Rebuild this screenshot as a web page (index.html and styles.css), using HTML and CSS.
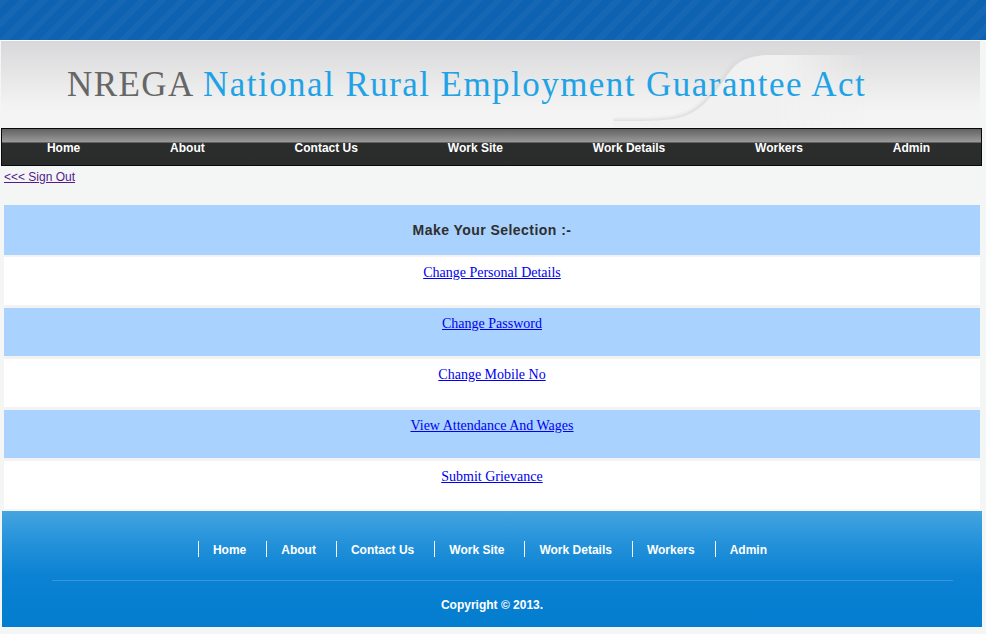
FILE: index.html
```html
<!DOCTYPE html>
<html>
<head>
<meta charset="utf-8">
<title>NREGA</title>
<link rel="stylesheet" href="styles.css">
</head>
<body>
<div class="topbar"></div>
<div class="page">
  <header class="header">
    <svg class="swoosh" width="300" height="86" viewBox="0 0 300 86">
      <defs>
        <linearGradient id="fade" x1="0" y1="0" x2="1" y2="0">
          <stop offset="0" stop-color="#ffffff" stop-opacity="1"/>
          <stop offset="0.55" stop-color="#ffffff" stop-opacity="1"/>
          <stop offset="0.85" stop-color="#ffffff" stop-opacity="0"/>
        </linearGradient>
        <mask id="m">
          <rect x="0" y="0" width="300" height="86" fill="url(#fade)"/>
        </mask>
        <filter id="bl"><feGaussianBlur stdDeviation="1.6"/></filter>
      </defs>
      <g mask="url(#m)">
        <path d="M0 86 L0 78 C60 78 70 78 90 60 C120 30 110 16 150 12 L300 12 L300 86 Z" fill="#d9d9da" filter="url(#bl)" opacity="0.8"/>
        <path d="M0 86 L0 80 C60 80 72 80 92 62 C122 32 114 18 152 14 L300 14 L300 86 Z" fill="#f1f1f1"/>
      </g>
    </svg>
    <h1 class="title"><span class="grey">NREGA</span> <span class="blue">National Rural Employment Guarantee Act</span></h1>
  </header>
  <nav class="menu">
    <a href="#">Home</a>
    <a href="#">About</a>
    <a href="#">Contact Us</a>
    <a href="#">Work Site</a>
    <a href="#">Work Details</a>
    <a href="#">Workers</a>
    <a href="#">Admin</a>
  </nav>
  <div class="signout"><a href="#">&lt;&lt;&lt; Sign Out</a></div>
  <div class="options">
    <div class="row head">Make Your Selection :-</div>
    <div class="row white"><a href="#">Change Personal Details</a></div>
    <div class="row blue-row"><a href="#">Change Password</a></div>
    <div class="row white"><a href="#">Change Mobile No</a></div>
    <div class="row blue-row"><a href="#">View Attendance And Wages</a></div>
    <div class="row white"><a href="#">Submit Grievance</a></div>
  </div>
  <footer class="footer">
    <ul class="fnav">
      <li><a href="#">Home</a></li>
      <li><a href="#">About</a></li>
      <li><a href="#">Contact Us</a></li>
      <li><a href="#">Work Site</a></li>
      <li><a href="#">Work Details</a></li>
      <li><a href="#">Workers</a></li>
      <li><a href="#">Admin</a></li>
    </ul>
    <div class="copy">Copyright © 2013.</div>
  </footer>
</div>
</body>
</html>
```

FILE: styles.css
```css
html, body {
  margin: 0;
  padding: 0;
}
body {
  background: #f4f6f6;
  font-family: "Liberation Sans", Arial, sans-serif;
}
.topbar {
  height: 40px;
  background-color: #0d62b1;
  background-image: repeating-linear-gradient(135deg, rgba(255,255,255,0.035) 0px, rgba(255,255,255,0.035) 6px, rgba(0,0,0,0) 6px, rgba(0,0,0,0) 14px);
  border-bottom: 1px solid #ffffff;
}
.page {
  width: 981px;
  margin-left: 1px;
}
.header {
  position: relative;
  height: 86px;
  width: 979px;
  background: linear-gradient(#d8d8da, #f3f3f3 75%, #f5f5f5);
  overflow: hidden;
}
.swoosh {
  position: absolute;
  left: 612px;
  top: 0;
}
.title {
  position: relative;
  margin: 0;
  padding: 24px 0 0 66px;
  font-family: "Liberation Serif", "Times New Roman", serif;
  font-weight: normal;
  font-size: 35px;
  line-height: 40px;
  letter-spacing: 1.45px;
  white-space: nowrap;
}
.grey { color: #666666; }
.blue { color: #1fa3e6; }
.menu {
  height: 36px;
  margin-top: 1px;
  border: 1px solid #0a0a0a;
  background: linear-gradient(#626262 0px, #9a9a9a 13px, #2c2d2d 14px, #2a2b2b 100%);
  display: flex;
  justify-content: space-around;
  align-items: center;
  padding-right: 6px;
}
.menu a {
  color: #ffffff;
  font-weight: bold;
  font-size: 12px;
  text-decoration: none;
  padding-top: 1px;
}
.signout {
  padding: 4px 0 0 3px;
  height: 39px;
  box-sizing: border-box;
  font-size: 12px;
}
.signout a { color: #551a8b; }
.options {
  margin-left: 3px;
  width: 976px;
  display: flex;
  flex-direction: column;
  gap: 3px;
  background: #f3f3f3;
}
.row {
  height: 48px;
  box-sizing: border-box;
  text-align: center;
  font-family: "Liberation Serif", "Times New Roman", serif;
  font-size: 14px;
  padding-top: 8px;
}
.row a { color: #0000ee; }
.row.head {
  height: 50px;
  margin-bottom: -1px;
  padding-top: 0;
  background: #a9d2fe;
  font-family: "Liberation Sans", Arial, sans-serif;
  font-weight: bold;
  font-size: 14px;
  letter-spacing: 0.45px;
  color: #2e2e2e;
  display: flex;
  align-items: center;
  justify-content: center;
}
.white { background: #ffffff; }
.blue-row { background: #a9d2fe; }
.footer {
  margin-top: 2px;
  margin-left: 1px;
  width: 980px;
  height: 116px;
  background: linear-gradient(#45a5e0 0%, #2693da 25%, #0c82d3 55%, #037dcf 100%);
  box-sizing: border-box;
  padding: 30px 29px 0 50px;
}
.fnav {
  list-style: none;
  margin: 0;
  padding: 0 20px 0 0;
  display: flex;
  justify-content: center;
  height: 39px;
  border-bottom: 1px solid #3996da;
}
.fnav li {
  border-left: 1px solid #ffffff;
  height: 16px;
  padding: 0 20px 0 14px;
  line-height: 16px;
}
.fnav a {
  color: #ffffff;
  font-weight: bold;
  font-size: 12px;
  text-decoration: none;
}
.copy {
  text-align: center;
  color: #ffffff;
  font-weight: bold;
  font-size: 12px;
  padding: 17px 21px 0 0;
}
```
